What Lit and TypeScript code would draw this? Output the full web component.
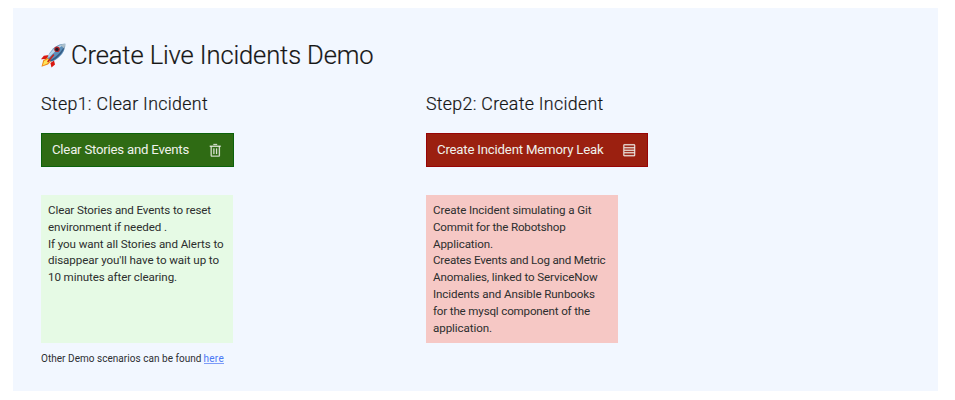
import { LitElement, html, css, svg } from "lit";
import { customElement, property } from "lit/decorators.js";

/** One line of text, tracked so that it fills the given measure. */
@customElement("fit-line")
class FitLine extends LitElement {
  @property() text = "";
  @property({ type: Number }) measure = 0;

  static styles = css`
    :host { display: block; white-space: pre; }
    span { display: inline-block; }
  `;

  render() {
    return html`<span>${this.text}</span>`;
  }

  updated() {
    const span = this.renderRoot.querySelector("span")!;
    span.style.letterSpacing = "0px";
    const natural = span.getBoundingClientRect().width;
    span.style.letterSpacing = (this.measure - natural) / this.text.length + "px";
  }
}

type Line = [string, number];

const line = ([text, measure]: Line) =>
  html`<fit-line .text=${text} .measure=${measure}></fit-line>`;

const trash = svg`
  <path d="M12 12h2v12h-2zM18 12h2v12h-2z"/>
  <path d="M4 6v2h2v20a2 2 0 0 0 2 2h16a2 2 0 0 0 2-2V8h2V6zM8 28V8h16v20zM12 2h8v2h-8z"/>`;

const rows = svg`
  <path d="M27 3H5a2 2 0 0 0-2 2v22a2 2 0 0 0 2 2h22a2 2 0 0 0 2-2V5a2 2 0 0 0-2-2zM27 5v4.500H5V5zM27 11.500v3.500H5v-3.500zM27 17v3.500H5V17zM5 27v-4.500h22V27z"/>`;

const clearLines: Line[] = [
  ["Clear Stories and Events to reset", 163],
  ["environment if needed .", 119],
  ["If you want all Stories and Alerts to", 175.5],
  ["disappear you'll have to wait up to", 171],
  ["10 minutes after clearing.", 129],
];

const createLines: Line[] = [
  ["Create Incident simulating a Git", 158.5],
  ["Commit for the Robotshop", 132.5],
  ["Application.", 60],
  ["Creates Events and Log and Metric", 172.5],
  ["Anomalies, linked to ServiceNow", 164.5],
  ["Incidents and Ansible Runbooks", 162],
  ["for the mysql component of the", 157],
  ["application.", 59],
];

@customElement("app-root")
class AppRoot extends LitElement {
  static styles = css`
    :host {
      display: block;
      height: 400px;
      box-sizing: border-box;
      padding: 8px 17px 9px 13px;
      background: #fff;
      color: #161616;
      font-family: Roboto, "Noto Sans", sans-serif;
    }
    .panel {
      height: 383px;
      box-sizing: border-box;
      padding: 29px 28px 0;
      background: #f2f7ff;
    }
    .title {
      display: flex;
      align-items: center;
      height: 36px;
      margin: 0;
      font-size: 25.500px;
      font-weight: 300;
      -webkit-text-stroke: 0.200px currentColor;
    }
    .rocket { width: 25px; height: 25px; margin: 0 5.500px 0 -0.500px; }
    .steps { display: grid; grid-template-columns: 385px 1fr; }
    h2 {
      height: 24px;
      margin: 18px 0;
      line-height: 26px;
      font-size: 17.800px;
      font-weight: 300;
      -webkit-text-stroke: 0.200px currentColor;
    }
    button {
      display: flex;
      align-items: center;
      justify-content: space-between;
      box-sizing: border-box;
      height: 33.500px;
      padding: 0 11px 0 10px;
      border: 1px solid;
      border-radius: 0;
      color: #f0f2ec;
      font-family: inherit;
      font-size: 13.200px;
      line-height: 17px;
      text-align: left;
    }
    .clear { width: 193px; background: #2f6b14; border-color: #0c620b; }
    .create { width: 222px; background: #9b2010; border-color: #970406; }
    .icon { width: 14.500px; height: 14.500px; fill: currentColor; stroke: currentColor; stroke-width: 0.500; }
    .note {
      box-sizing: border-box;
      width: 192px;
      height: 148px;
      margin-top: 28.500px;
      padding: 7px 7px;
      color: #2c2e2e;
      font-size: 11.600px;
      line-height: 16.830px;
    }
    .green { background: #e6fae5; }
    .red { background: #f6c8c5; }
    .more {
      display: flex;
      gap: 2px;
      margin-top: 7.500px;
      color: #2c2e32;
      font-size: 10px;
      line-height: 16px;
    }
    a {
      height: 13px;
      box-sizing: border-box;
      border-bottom: 1px solid #7d9cf8;
      color: #4b78f5;
    }
  `;

  render() {
    return html`
      <main class="panel">
        <h1 class="title">
          <svg class="rocket" viewBox="0 0 25 25">
            <path d="M8 12 2.800 12.700 0 16.300 5.500 16z" fill="#d81912"/>
            <path d="M13 17.500 14 21.500 10.500 24.500 9.400 20z" fill="#d9160f"/>
            <path d="M7 14.500 2.200 17.200.500 23.700 7 21.600 10.500 18z" fill="#f08a18"/>
            <path d="M7 16 3.200 18 1.800 22.500 6.200 20.500 9 18z" fill="#ffe45a"/>
            <path d="M24.300.700C18 .200 11.500 4 7.200 12.600L6.500 15 10 18.400 12.500 18C19.500 14.500 24.800 7.500 24.300.700z" fill="#5d8fba"/>
            <path d="M23 1.300C17 2 11 6.500 7.200 12.800L7.500 15C12.500 10 17 5.500 23 1.300z" fill="#b9d5e8"/>
            <path d="M24 2C23 8.500 18.500 14 11.500 17.800L10 18.400 9 17.300C15.500 13.800 20.500 9 24 2z" fill="#365c84"/>
            <path d="M18.600 1.900 24.300.700 23.400 6.200C22.500 4.300 20.700 2.500 18.600 1.900z" fill="#aebfca"/>
            <circle cx="16" cy="6.300" r="2.800" fill="#b7262b"/>
            <circle cx="15.900" cy="6.400" r="1.700" fill="#241d2b"/>
            <path d="M12.500 12 7 18.500" stroke="#c5221b" stroke-width="1.600" stroke-linecap="round"/>
          </svg>
          ${line(["Create Live Incidents Demo", 302.5])}
        </h1>
        <div class="steps">
          <section>
            <h2>${line(["Step1: Clear Incident", 167])}</h2>
            <button class="clear">
              ${line(["Clear Stories and Events", 137])}
              <svg class="icon" viewBox="0 0 32 32">${trash}</svg>
            </button>
            <div class="note green">${clearLines.map(line)}</div>
            <div class="more">
              ${line(["Other Demo scenarios can be found", 160.5])}
              <a>${line(["here", 20.5])}</a>
            </div>
          </section>
          <section>
            <h2>${line(["Step2: Create Incident", 177.5])}</h2>
            <button class="create">
              ${line(["Create Incident Memory Leak", 166.5])}
              <svg class="icon" viewBox="0 0 32 32">${rows}</svg>
            </button>
            <div class="note red">${createLines.map(line)}</div>
          </section>
        </div>
      </main>
    `;
  }
}
